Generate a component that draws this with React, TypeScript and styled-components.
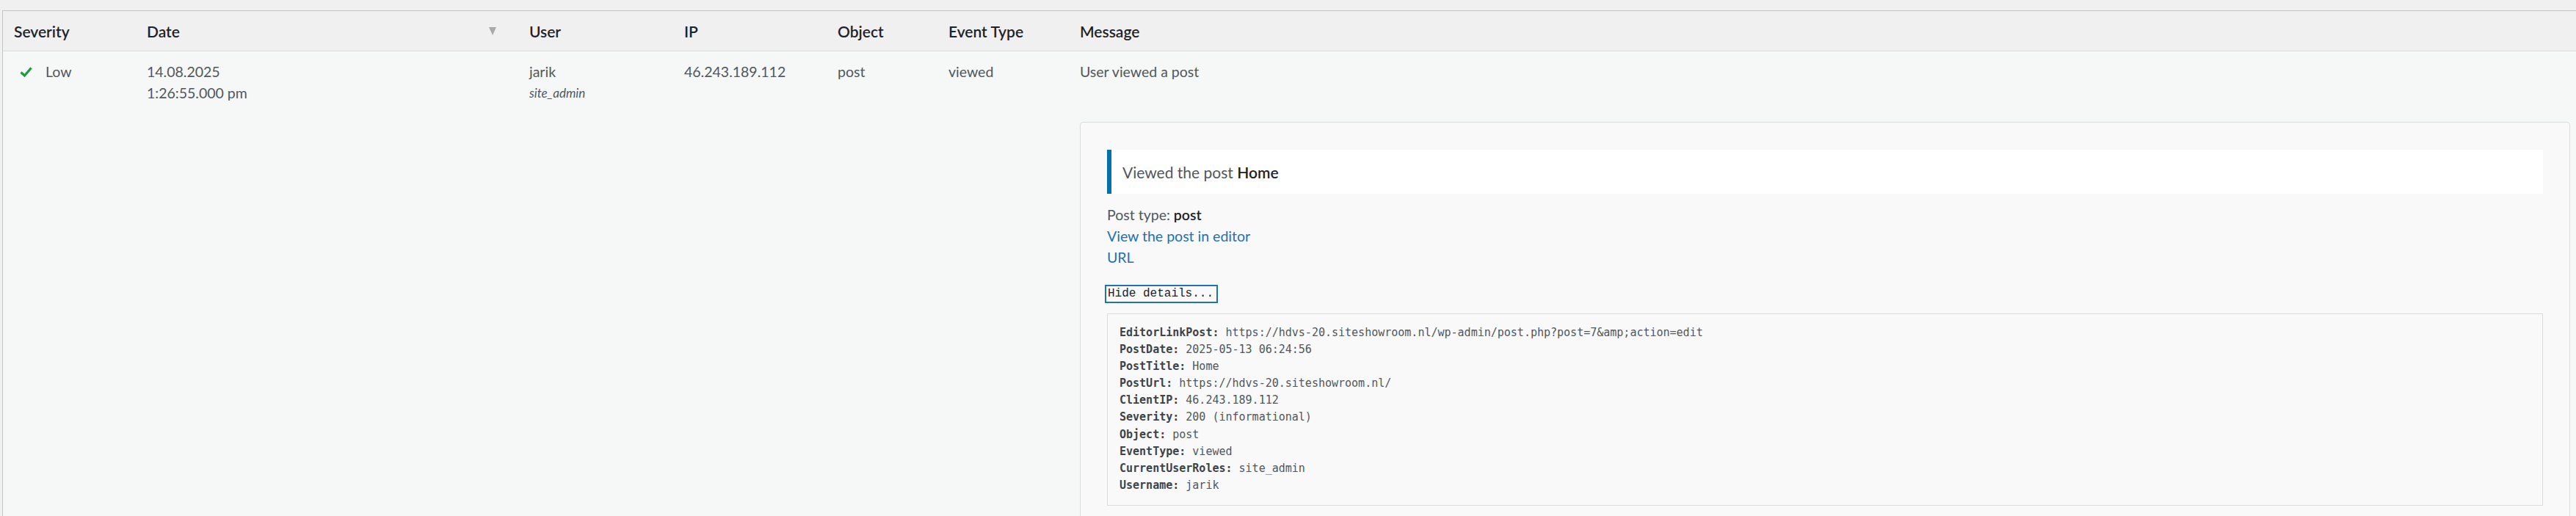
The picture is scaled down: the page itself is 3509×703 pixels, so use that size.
import React from "react";
import styled, { createGlobalStyle } from "styled-components";

const GlobalStyle = createGlobalStyle`
  html, body {
    margin: 0;
    padding: 0;
    background: #f0f0f1;
    overflow: hidden;
  }
  body {
    font-family: Lato, "Liberation Sans", sans-serif;
    color: #50575e;
  }
`;

const Page = styled.div`
  box-sizing: border-box;
  height: 703px;
  overflow: hidden;
  padding: 14px 0 0 3px;
`;

const Table = styled.table`
  width: 3513px;
  table-layout: fixed;
  border-collapse: separate;
  border-spacing: 0;
  border-top: 1px solid #c3c4c7;
  border-left: 1px solid #c3c4c7;
  border-right: 1px solid #c3c4c7;
  background: #f6f7f7;
`;

const HeadRow = styled.tr`
  background: #f0f0f1;
`;

const Th = styled.th<{ $w?: number }>`
  ${(p) => (p.$w ? `width: ${p.$w}px;` : "")}
  box-sizing: border-box;
  height: 55px;
  padding: 0 15px;
  text-align: left;
  vertical-align: middle;
  font-size: 21px;
  font-weight: 600;
  color: #1d2327;
  border-bottom: 1px solid #dcdcde;
  white-space: nowrap;
`;

const SortHead = styled.div`
  display: flex;
  align-items: center;
  justify-content: space-between;
`;

const SortArrow = styled.svg`
  width: 10px;
  height: 11px;
  margin-right: 15px;
  fill: #a7aaad;
`;

const Td = styled.td`
  padding: 13px 15px 12px;
  vertical-align: top;
  font-size: 19.5px;
  line-height: 29px;
  color: #50575e;
`;

const MsgTd = styled(Td)`
  padding: 13px 14px 0 15px;
`;

const SeverityCell = styled.div`
  display: flex;
  align-items: center;
  gap: 18px;
  padding-left: 8px;
`;

const Check = styled.svg`
  width: 17px;
  height: 14px;
  flex: none;
`;

const Line = styled.div``;

const Role = styled.div`
  font-size: 17px;
  font-style: italic;
  line-height: 29px;
`;

const Panel = styled.div`
  margin-top: 54px;
  border: 1px solid #dcdcde;
  border-radius: 4px;
  background: #f9f9f9;
  padding: 37px 36px 37px 36px;
`;

const Notice = styled.div`
  height: 60px;
  display: flex;
  align-items: center;
  background: #fff;
  border-left: 6px solid #0073aa;
  padding: 0 15px;
  font-size: 21px;
  color: #50575e;
  strong {
    color: #1d2327;
    font-weight: 600;
  }
`;

const InfoBlock = styled.div`
  margin-top: 14px;
  font-size: 19.5px;
  line-height: 29px;
  color: #50575e;
  strong {
    color: #1d2327;
    font-weight: 600;
  }
`;

const InfoLink = styled.a`
  display: block;
  color: #2271b1;
  text-decoration: none;
`;

const ToggleButton = styled.button`
  display: block;
  margin-top: 26px;
  padding: 0 3px 0 1px;
  border: none;
  background: transparent;
  font-family: "Liberation Mono", "Courier New", monospace;
  font-size: 16px;
  line-height: 19px;
  color: #1d2327;
  outline: 2px solid #2271b1;
  outline-offset: 1px;
  cursor: pointer;
`;

const Details = styled.pre`
  margin: 17px 0 0;
  border: 1px solid #dcdcde;
  background: #f9f9f9;
  padding: 14px 16px 15px;
  font-family: "DejaVu Sans Mono", monospace;
  font-size: 15px;
  line-height: 23.1px;
  color: #50575e;
  white-space: pre;
`;

const Key = styled.b`
  color: #3c434a;
  font-weight: 700;
`;

const details: [string, string][] = [
  ["EditorLinkPost", "https://hdvs-20.siteshowroom.nl/wp-admin/post.php?post=7&amp;action=edit"],
  ["PostDate", "2025-05-13 06:24:56"],
  ["PostTitle", "Home"],
  ["PostUrl", "https://hdvs-20.siteshowroom.nl/"],
  ["ClientIP", "46.243.189.112"],
  ["Severity", "200 (informational)"],
  ["Object", "post"],
  ["EventType", "viewed"],
  ["CurrentUserRoles", "site_admin"],
  ["Username", "jarik"],
];

export default function App() {
  return (
    <>
      <GlobalStyle />
      <Page>
        <Table>
          <thead>
            <HeadRow>
              <Th $w={181}>Severity</Th>
              <Th $w={521}>
                <SortHead>
                  <span>Date</span>
                  <SortArrow viewBox="0 0 10 11">
                    <polygon points="0,0 10,0 5,11" />
                  </SortArrow>
                </SortHead>
              </Th>
              <Th $w={211}>User</Th>
              <Th $w={209}>IP</Th>
              <Th $w={151}>Object</Th>
              <Th $w={179}>Event Type</Th>
              <Th>Message</Th>
            </HeadRow>
          </thead>
          <tbody>
            <tr>
              <Td>
                <SeverityCell>
                  <Check viewBox="0 0 17 14">
                    <path
                      d="M1.5 7.5 L6.5 12 L15.5 1.5"
                      fill="none"
                      stroke="#1e9b3b"
                      strokeWidth="3.2"
                      strokeLinecap="butt"
                      strokeLinejoin="miter"
                    />
                  </Check>
                  <span>Low</span>
                </SeverityCell>
              </Td>
              <Td>
                <Line>14.08.2025</Line>
                <Line>1:26:55.000 pm</Line>
              </Td>
              <Td>
                <Line>jarik</Line>
                <Role>site_admin</Role>
              </Td>
              <Td>46.243.189.112</Td>
              <Td>post</Td>
              <Td>viewed</Td>
              <MsgTd>
                <Line>User viewed a post</Line>
                <Panel>
                  <Notice>
                    <span>
                      Viewed the post <strong>Home</strong>
                    </span>
                  </Notice>
                  <InfoBlock>
                    <div>
                      Post type: <strong>post</strong>
                    </div>
                    <InfoLink href="#">View the post in editor</InfoLink>
                    <InfoLink href="#">URL</InfoLink>
                  </InfoBlock>
                  <ToggleButton type="button">Hide details...</ToggleButton>
                  <Details>
                    {details.map(([k, v], i) => (
                      <React.Fragment key={k}>
                        <Key>{k}:</Key> {v}
                        {i < details.length - 1 ? "\n" : ""}
                      </React.Fragment>
                    ))}
                  </Details>
                </Panel>
              </MsgTd>
            </tr>
          </tbody>
        </Table>
      </Page>
    </>
  );
}
